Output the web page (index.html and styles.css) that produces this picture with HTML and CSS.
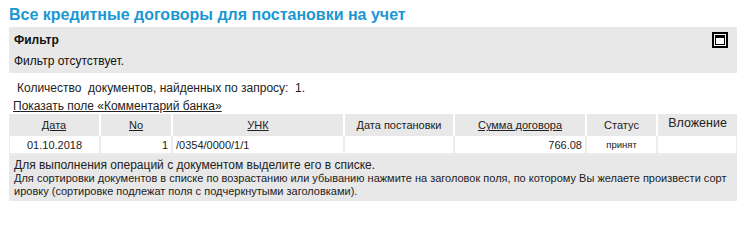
FILE: index.html
```html
<!DOCTYPE html>
<html lang="ru">
<head>
<meta charset="utf-8">
<title>Все кредитные договоры для постановки на учет</title>
<link rel="stylesheet" href="styles.css">
</head>
<body>
<h1 class="title">Все кредитные договоры для постановки на учет</h1>
<section class="filter">
  <div class="filter-head">
    <span class="filter-title">Фильтр</span>
    <span class="win-icon" aria-hidden="true"><span class="win-inner"></span></span>
  </div>
  <div class="filter-body">Фильтр отсутствует.</div>
</section>
<div class="count">Количество  документов, найденных по запросу:  1.</div>
<a class="show-link" href="#">Показать поле «Комментарий банка»</a>
<table class="docs">
  <colgroup>
    <col class="c-date"><col class="c-no"><col class="c-unk"><col class="c-reg"><col class="c-sum"><col class="c-status"><col class="c-att">
  </colgroup>
  <thead>
    <tr>
      <th><a href="#">Дата</a></th>
      <th><a href="#">No</a></th>
      <th><a href="#">УНК</a></th>
      <th>Дата постановки</th>
      <th><a href="#">Сумма договора</a></th>
      <th>Статус</th>
      <th class="att">Вложение</th>
    </tr>
  </thead>
  <tbody>
    <tr>
      <td class="center">01.10.2018</td>
      <td class="right">1</td>
      <td>/0354/0000/1/1</td>
      <td></td>
      <td class="right">766.08</td>
      <td class="center small">принят</td>
      <td></td>
    </tr>
  </tbody>
</table>
<div class="hint">
  <div class="hint-main">Для выполнения операций с документом выделите его в списке.</div>
  <div class="hint-sub">Для сортировки документов в списке по возрастанию или убыванию нажмите на заголовок поля, по которому Вы желаете произвести сорт<br>ировку (сортировке подлежат поля с подчеркнутыми заголовками).</div>
</div>
</body>
</html>
```
FILE: styles.css
```css
html, body {
  margin: 0;
  padding: 0;
  background: #fff;
}
body {
  padding: 0 7px 0 9px;
  font-family: Arial, "Liberation Sans", sans-serif;
  font-size: 12px;
  line-height: 14px;
  color: #222;
}
.title {
  margin: 5px 0 3px;
  font-size: 16px;
  line-height: 19px;
  font-weight: bold;
  color: #1b97d2;
}
.filter {
  background: #e8e8e8;
  padding: 5px 9px 5px 5px;
}
.filter-head {
  display: flex;
  align-items: center;
  justify-content: space-between;
  height: 16px;
}
.filter-title {
  font-weight: bold;
  color: #111;
}
.win-icon {
  box-sizing: border-box;
  width: 16px;
  height: 16px;
  border: 2px solid #000;
  background: #fff;
  padding: 1px;
  display: flex;
}
.win-inner {
  flex: 1;
  box-sizing: border-box;
  border: 1px solid #000;
  border-top-width: 3px;
}
.filter-body {
  margin-top: 6px;
  color: #111;
}
.count {
  margin-top: 8px;
  padding-left: 8px;
  white-space: pre;
  color: #222;
}
.show-link {
  display: block;
  margin-top: 4px;
  padding-left: 4px;
  color: #222;
  text-decoration: underline;
  width: max-content;
}
.docs {
  margin-top: 1px;
  width: 100%;
  border-collapse: separate;
  border-spacing: 0;
  table-layout: fixed;
  font-size: 11px;
}
.c-date { width: 92px; }
.c-no { width: 72px; }
.c-unk { width: 172px; }
.c-reg { width: 110px; }
.c-sum { width: 132px; }
.c-status { width: 71px; }
.c-att { width: auto; }
.docs th {
  background: #e8e8e8;
  font-weight: normal;
  height: 20px;
  padding: 0 3px;
  border-right: 2px solid #fff;
  text-align: center;
  color: #222;
}
.docs th:last-child { border-right: 0; }
.docs th a { color: #222; text-decoration: underline; }
.docs th.att {
  font-size: 12.5px;
  vertical-align: top;
  padding-top: 2px;
}
.docs td {
  background: #fff;
  height: 17px;
  padding: 0 3px;
  border-right: 2px solid #ececec;
  border-bottom: 2px solid #ececec;
  color: #222;
}
.docs td:first-child { border-left: 1px solid #ececec; }
.docs td:last-child { border-right: 1px solid #ececec; }
.center { text-align: center; }
.right { text-align: right; }
.docs td.small { font-size: 9.5px; }
.hint {
  background: #e8e8e8;
  padding: 4px 5px 3px;
  white-space: nowrap;
  color: #222;
}
.hint-main {
  line-height: 13px;
}
.hint-sub {
  font-size: 11px;
  line-height: 13px;
}
```
